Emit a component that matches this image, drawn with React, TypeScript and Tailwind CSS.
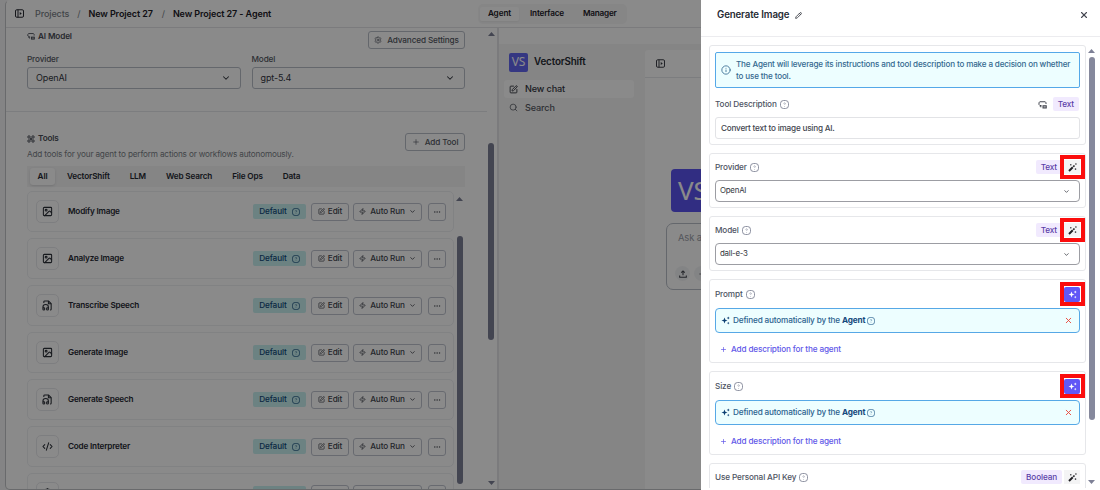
import type { ReactNode } from "react";
import { ChevronDown, CodeXml, Ellipsis, Globe, Image, Info, Pencil, Plus, Search, Settings, SquarePen, X, Zap } from "lucide-react";

type IconProps = { size?: number; className?: string };

function HelpIcon({ size = 9, className = "" }: IconProps) {
  return (
    <svg width={size} height={size} viewBox="0 0 18 18" fill="none" stroke="currentColor" strokeWidth="1.6" className={`shrink-0 ${className}`}>
      <rect x="1" y="1" width="16" height="16" rx="6" />
      <path d="M7.300 7.200c.2-2 3.400-1.900 3.400 0 0 1.100-1.700 1.100-1.700 2.500M9 12v1.200" strokeWidth="1.100" />
    </svg>
  );
}

function PanelIcon({ size = 9, className = "" }: IconProps) {
  return (
    <svg width={size} height={size} viewBox="0 0 18 18" fill="none" stroke="currentColor" strokeWidth="1.900" className={`shrink-0 ${className}`}>
      <rect x="1" y="1.500" width="16" height="15" rx="2.500" />
      <path d="M6 1.500v15" />
      <path d="M9.500 6v6l4-3z" fill="currentColor" stroke="none" />
    </svg>
  );
}

function ModelIcon({ size = 9, className = "" }: IconProps) {
  return (
    <svg width={size} height={size} viewBox="0 0 18 18" fill="none" stroke="currentColor" strokeWidth="2" className={`shrink-0 ${className}`}>
      <path d="M7 11H4L2 9V5.500l1.500-2h11l1.500 2V8" />
      <path d="M4.500 11v2.500H7" />
      <rect x="10" y="11.500" width="6.500" height="4.500" fill="currentColor" fillOpacity=".4" />
    </svg>
  );
}

function ToolsIcon({ size = 9, className = "" }: IconProps) {
  return (
    <svg width={size} height={size} viewBox="0 0 18 18" fill="none" stroke="currentColor" strokeWidth="2.200" className={`shrink-0 ${className}`}>
      <circle cx="4.500" cy="4.500" r="2.700" />
      <circle cx="13.500" cy="4.500" r="2.700" />
      <circle cx="4.500" cy="13.500" r="2.700" />
      <circle cx="13.500" cy="13.500" r="2.700" />
      <path d="M7 7l4 4M11 7l-4 4" />
    </svg>
  );
}

function SpeechFile({ size = 11 }: IconProps) {
  return (
    <svg width={size} height={size} viewBox="0 0 24 24" fill="none" stroke="currentColor" strokeWidth="2.300" strokeLinejoin="round">
      <path d="M4 6.800V4a2 2 0 0 1 2-2h8l6 6v12a2 2 0 0 1-2 2h-.5" />
      <path d="M14 2v6h6" />
      <path d="M2 19a2 2 0 0 1 4 0v1a2 2 0 0 1-4 0v-4a6 6 0 0 1 12 0v4a2 2 0 0 1-4 0v-1a2 2 0 0 1 4 0" />
    </svg>
  );
}

function WandIcon({ size = 9 }: IconProps) {
  return (
    <svg width={size} height={size} viewBox="0 0 18 18" fill="none" stroke="currentColor" className="shrink-0">
      <path d="M2 16 9.500 8.500" strokeWidth="4" />
      <path d="M10.500 7.500 13 5" strokeWidth="3.400" />
      <path d="M5.500 2v3M4 3.500h3M15.800 .5v3M14.300 2h3M15 10.500v3.500M13.200 12.200h3.600" strokeWidth="1.200" />
    </svg>
  );
}

function SparkIcon({ size = 9 }: IconProps) {
  return (
    <svg width={size} height={size} viewBox="0 0 18 18" fill="currentColor" className="shrink-0">
      <path d="M7 3l1.700 4.300L13 9l-4.300 1.700L7 15l-1.700-4.300L1 9l4.300-1.700z" />
      <path d="M14.500 1l.9 2.100 2.100.9-2.100.9-.9 2.100-.9-2.100-2.100-.9 2.100-.9z" />
      <path d="M14.500 11.500l.8 1.900 1.900.8-1.900.8-.8 1.900-.8-1.900-1.900-.8 1.900-.8z" />
    </svg>
  );
}

function Arrow({ down = false }: { down?: boolean }) {
  return (
    <svg width="7" height="4" viewBox="0 0 7 4" className="shrink-0 text-[#7d8096]" fill="currentColor">
      <path d={down ? "M0 0h7L3.500 4z" : "M0 4h7L3.500 0z"} />
    </svg>
  );
}

const categories = ["VectorShift", "LLM", "Web Search", "File Ops", "Data"];

const tools: { name: string; icon: ReactNode }[] = [
  { name: "Modify Image", icon: <Image size={11} strokeWidth={2.3} /> },
  { name: "Analyze Image", icon: <Image size={11} strokeWidth={2.3} /> },
  { name: "Transcribe Speech", icon: <SpeechFile /> },
  { name: "Generate Image", icon: <Image size={11} strokeWidth={2.3} /> },
  { name: "Generate Speech", icon: <SpeechFile /> },
  { name: "Code Interpreter", icon: <CodeXml size={11} strokeWidth={2.3} /> },
  { name: "Web Search", icon: <Globe size={11} strokeWidth={2.3} /> },
];

function ToolRow({ name, icon }: { name: string; icon: ReactNode }) {
  const button = "flex h-[18px] items-center justify-center rounded-[3px] border border-[#c0c5cf] font-medium text-[#43464f]";
  return (
    <div className="flex h-[41px] shrink-0 items-center rounded-[5px] border border-[#eef0f3] pr-[7px] pl-2">
      <div className="mr-[9px] flex size-[23px] items-center justify-center rounded-[5px] border border-[#e8e9ed] text-[#2c3038]">{icon}</div>
      <span className="flex-1 font-semibold tracking-[-0.2px] text-[#262a33]">{name}</span>
      <span className="mr-[5px] flex h-[15px] w-[53px] items-center justify-center gap-[5px] rounded-[2px] bg-[#c7f0f1] font-medium text-[#124a7a]">
        Default <HelpIcon size={8} />
      </span>
      <span className={`mr-1 w-[38px] gap-[3px] ${button}`}>
        <SquarePen size={7} strokeWidth={2.4} /> Edit
      </span>
      <span className={`mr-[6px] w-[69px] gap-1 ${button}`}>
        <Zap size={7} strokeWidth={2.6} /> Auto Run <ChevronDown size={7} strokeWidth={2.8} />
      </span>
      <span className={`w-[18px] ${button}`}>
        <Ellipsis size={8} strokeWidth={1.6} />
      </span>
    </div>
  );
}

function Select({ label, value }: { label: string; value: string }) {
  return (
    <div className="flex-1">
      <div className="h-[15px] leading-[15px] font-medium text-[#555963]">{label}</div>
      <div className="flex h-[22px] items-center justify-between rounded-[3px] border border-[#b9bec8] pr-[9px] pl-2 text-[9px] text-[#33363e]">
        {value}
        <ChevronDown size={10} strokeWidth={2.5} />
      </div>
    </div>
  );
}

function AgentEditor() {
  return (
    <div className="flex w-[493px] shrink-0 border-r-2 border-[#e3e4e8]">
      <div className="flex min-w-0 flex-1 flex-col">
        <div className="h-[84px] border-b border-[#e6e7ea] pr-[22px] pl-[21px]">
          <div className="flex h-6 justify-between">
            <div className="flex h-4 items-center gap-[3px] font-semibold text-[#494d57]">
              <ModelIcon size={8} /> AI Model
            </div>
            <div className="mt-[3px] flex h-[18px] w-[97px] items-center justify-center gap-[5px] rounded-[3px] border border-[#b9bec8] font-medium text-[#555963]">
              <Settings size={8} /> Advanced Settings
            </div>
          </div>
          <div className="flex gap-[11px]">
            <Select label="Provider" value="OpenAI" />
            <Select label="Model" value="gpt-5.4" />
          </div>
        </div>
        <div className="mt-[21px] flex min-h-0 flex-1 flex-col pl-[21px]">
          <div className="mr-[22px] flex h-[33px] justify-between">
            <div>
              <div className="flex h-[11px] items-center gap-[3px] font-semibold text-[#494d57]">
                <ToolsIcon size={8} /> Tools
              </div>
              <div className="mt-1 leading-3 tracking-[-0.17px] text-[#7b7f88]">Add tools for your agent to perform actions or workflows autonomously.</div>
            </div>
            <div className="flex h-[18px] w-[60px] items-center justify-center gap-[5px] rounded-[3px] border border-[#b9bec8] font-medium text-[#555963]">
              <Plus size={8} /> Add Tool
            </div>
          </div>
          <div className="mr-[22px] flex h-[21px] items-center gap-5 bg-[#f5f5f6] pl-[3px] font-semibold tracking-[-0.16px] text-[#262a33]">
            <span className="-mr-2 flex h-[17px] w-[25px] items-center justify-center rounded-[3px] bg-white shadow-sm">All</span>
            {categories.map((name) => (
              <span key={name}>{name}</span>
            ))}
          </div>
          <div className="flex min-h-0 flex-1 overflow-hidden">
            <div className="flex w-[427px] shrink-0 flex-col gap-[6px] pt-1">
              {tools.map((tool, i) => (
                <ToolRow key={i} name={tool.name} icon={tool.icon} />
              ))}
            </div>
            <div className="ml-[2px] flex w-[7px] flex-col items-center pt-[10px]">
              <Arrow />
              <div className="mt-[35px] h-[248px] w-[6px] rounded-full bg-[#7d8096]" />
            </div>
          </div>
        </div>
      </div>
      <div className="flex w-[10px] shrink-0 flex-col items-center pt-1">
        <div className="mr-[2px] flex flex-col items-center">
          <Arrow />
          <div className="mt-[107px] mb-[141px] h-[197px] w-[6px] shrink-0 rounded-full bg-[#7d8096]" />
          <Arrow down />
        </div>
      </div>
    </div>
  );
}

function ChatPreview() {
  return (
    <div className="flex flex-1 flex-col">
      <div className="h-4 shrink-0" />
      <div className="flex flex-1 bg-[#f5f5f5]">
        <div className="w-[146px] shrink-0 pt-2 pr-[11px] pl-[5px]">
          <div className="mb-2 flex h-5 items-center gap-[6px] pl-[5px] text-[9.800px] font-semibold text-[#262a33]">
            <span className="flex size-[19px] items-center justify-center rounded-[2px] bg-[#6366f1] font-['Noto_Sans'] text-[12px] font-normal text-white">VS</span>
            VectorShift
          </div>
          <div className="flex h-[18px] items-center gap-[7px] rounded-[3px] bg-white pl-[5px] text-[9.100px] font-medium text-[#33363e]">
            <SquarePen size={9} strokeWidth={2.4} /> New chat
          </div>
          <div className="flex h-[19px] items-center gap-[7px] pl-[5px] text-[9.100px] font-medium text-[#555963]">
            <Search size={9} /> Search
          </div>
        </div>
        <div className="mt-[6px] flex-1 rounded-tl-[3px] bg-white">
          <div className="flex h-[28px] items-center border-b border-[#e6e7ea] pl-[11px] text-[#33363e]">
            <PanelIcon />
          </div>
          <div className="mt-[91px] ml-[26px] flex h-[43px] w-[80px] items-center rounded-[4px] bg-[#5b53f0] pl-[7px] font-['Noto_Sans'] text-[26px] text-white">VS</div>
          <div className="mt-[11px] ml-[21px] flex h-[67px] w-[220px] flex-col justify-between rounded-[7px] border border-[#b9bec8] px-[11px] pt-[8px] pb-2">
            <span className="text-[9.400px] leading-3 text-[#9a9ea8]">Ask a</span>
            <div className="-ml-[3px] flex gap-1">
              <span className="flex size-[15px] items-center justify-center rounded-full bg-[#f3f4f6] text-[#43464f]">
                <svg width="8" height="8" viewBox="0 0 18 18" fill="none" stroke="currentColor" strokeWidth="2.400">
                  <path d="M9 12V2.500M5 6l4-4 4 4M1.500 12.500v4h15v-4" />
                </svg>
              </span>
              <span className="flex size-[15px] items-center justify-center rounded-full bg-[#f3f4f6] text-[#43464f]">
                <Plus size={8} />
              </span>
            </div>
          </div>
        </div>
      </div>
    </div>
  );
}

function Mark() {
  return <span className="absolute -top-[5px] -right-[5px] h-6 w-[25px] border-4 border-[#fb0d0d]" />;
}

function Tag({ children }: { children: ReactNode }) {
  return <span className="flex h-[14px] items-center rounded-[2px] bg-[#f1eafe] px-[5px] font-medium text-[#5a3fa8]">{children}</span>;
}

function FieldHead({ label, children }: { label: string; children?: ReactNode }) {
  return (
    <div className="flex h-[16px] items-center">
      <span className="mr-[3px] font-medium text-[#4d5362]">{label}</span>
      <HelpIcon className="text-[#71778a]" />
      <div className="ml-auto flex items-center">{children}</div>
    </div>
  );
}

function WandButton({ marked = false }: { marked?: boolean }) {
  return (
    <span className="relative flex h-[14px] w-4 items-center justify-center bg-[#f4f4f5] text-[#1d1d22]">
      <WandIcon />
      {marked && <Mark />}
    </span>
  );
}

function SelectField({ label, value }: { label: string; value: string }) {
  return (
    <div className="h-[55px] shrink-0 rounded-[3px] border border-[#e6e7ea] px-[5px] pt-[5px]">
      <FieldHead label={label}>
        <Tag>Text</Tag>
        <span className="w-[2px]" />
        <WandButton marked />
      </FieldHead>
      <div className="mt-[5px] flex h-[22px] items-center justify-between rounded-[4px] border border-[#9c9da3] pr-[9px] pl-1 text-[7.900px] tracking-[-0.25px] text-[#33363e]">
        {value}
        <ChevronDown size={7} strokeWidth={2.5} />
      </div>
    </div>
  );
}

function AgentField({ label }: { label: string }) {
  return (
    <div className="h-[84px] shrink-0 rounded-[3px] border border-[#e6e7ea] px-[5px] pt-[6px]">
      <FieldHead label={label}>
        <span className="relative flex h-[15px] w-4 items-center justify-center rounded-[2px] bg-[#6157f6] text-white">
          <SparkIcon />
          <Mark />
        </span>
      </FieldHead>
      <div className="mt-[6px] flex h-[25px] items-center rounded-[4px] border-[1.500px] border-[#56a8e6] bg-[#edfeff] pr-[6px] pl-[5px] tracking-[-0.17px] text-[#2c638f]">
        <span className="mr-[3px] text-[#0d3f73]">
          <SparkIcon />
        </span>
        <span className="font-medium">Defined automatically by the</span>
        <b className="mr-[2px] ml-[2px] font-bold text-[#14497c]">Agent</b>
        <HelpIcon size={8} />
        <X size={9} strokeWidth={2.4} className="ml-auto text-[#ea4335]" />
      </div>
      <div className="mt-[10px] flex items-center gap-1 pl-[5px] leading-3 font-medium tracking-[-0.16px] text-[#6157e8]">
        <Plus size={7} strokeWidth={2.4} /> Add description for the agent
      </div>
    </div>
  );
}

function ToolDrawer() {
  return (
    <aside className="absolute inset-y-0 right-0 flex w-[399px] flex-col overflow-hidden bg-white">
      <header className="flex h-[37px] shrink-0 items-center gap-[6px] border-b border-[#ececef] pr-[11px] pb-[6px] pl-4">
        <h2 className="text-[9.700px] font-semibold text-[#262a33]">Generate Image</h2>
        <Pencil size={7} strokeWidth={2.8} className="text-[#33363e]" />
        <X size={10} strokeWidth={2.6} className="ml-auto text-[#43464f]" />
      </header>
      <div className="flex h-[451px] overflow-hidden">
        <div className="ml-2 flex w-[377px] shrink-0 flex-col gap-2 pt-2">
          <div className="h-[100px] shrink-0 rounded-[3px] border border-[#e6e7ea] px-[5px] pt-[6px]">
            <div className="flex h-[36px] items-center gap-[5px] rounded-[2px] border-[1.500px] border-[#55a8e8] bg-[#edfeff] pl-[5px] text-[8.100px] leading-3 font-medium tracking-[-0.16px] whitespace-nowrap text-[#34698f]">
              <Info size={10} className="shrink-0" />
              <p>
                The Agent will leverage its instructions and tool description to make a decision on whether
                <br />
                to use the tool.
              </p>
            </div>
            <div className="mt-2">
              <FieldHead label="Tool Description">
                <ModelIcon size={9} className="mr-[6px] text-[#43464f]" />
                <Tag>Text</Tag>
                <span className="w-[1px]" />
              </FieldHead>
            </div>
            <div className="mt-[5px] flex h-[22px] items-center rounded-[3px] border border-[#e2e3e6] pl-[5px] font-medium tracking-[-0.22px] text-[#43464f]">Convert text to image using AI.</div>
          </div>
          <SelectField label="Provider" value="OpenAI" />
          <SelectField label="Model" value="dall-e-3" />
          <AgentField label="Prompt" />
          <AgentField label="Size" />
          <div className="h-[60px] shrink-0 rounded-[3px] border border-[#e6e7ea] px-[5px] pt-[5px]">
            <FieldHead label="Use Personal API Key">
              <Tag>Boolean</Tag>
              <span className="w-[2px]" />
              <WandButton />
            </FieldHead>
          </div>
        </div>
        <div className="ml-[2px] flex w-[7px] flex-col items-center pt-3">
          <Arrow />
          <div className="mt-1 mb-[60px] h-[363px] w-[6px] shrink-0 rounded-full bg-[#85889c]" />
          <Arrow down />
        </div>
      </div>
    </aside>
  );
}

export default function App() {
  return (
    <div className="relative h-[490px] w-[1100px] overflow-hidden bg-[#f4f4f5] font-['Inter',sans-serif] text-[8.200px] tracking-[-0.13px]">
      <div className="flex h-[490px] pl-[5px]">
        <div className="flex flex-1 flex-col overflow-hidden rounded-l-[5px] border border-[#c3c4c8] border-t-transparent bg-white">
          <div className="flex h-[27px] shrink-0 items-center border-b border-[#e3e4e8] pb-px pl-[9px] text-[9px] font-semibold tracking-[-0.1px] text-[#1d2028]">
            <PanelIcon />
            <span className="ml-[11px] font-medium text-[#7b7f88]">Projects</span>
            <span className="mx-[8px] font-normal text-[#7b7f88]">/</span>
            <span>New Project 27</span>
            <span className="mr-[8px] ml-[9px] font-normal text-[#7b7f88]">/</span>
            <span className="flex-1">New Project 27 - Agent</span>
            <div className="mr-[472px] flex h-[20px] w-[149px] items-center rounded-[5px] bg-[#f7f7f8] pl-[2px] text-[8.200px]">
              <span className="flex h-[14px] w-[39px] items-center justify-center rounded-[2px] bg-white shadow-xs">Agent</span>
              <span className="ml-[11px] tracking-[-0.2px]">Interface</span>
              <span className="ml-[19px] tracking-[-0.2px]">Manager</span>
            </div>
          </div>
          <div className="flex min-h-0 flex-1">
            <AgentEditor />
            <ChatPreview />
          </div>
        </div>
      </div>
      <div className="absolute inset-0 bg-black/46" />
      <ToolDrawer />
    </div>
  );
}
